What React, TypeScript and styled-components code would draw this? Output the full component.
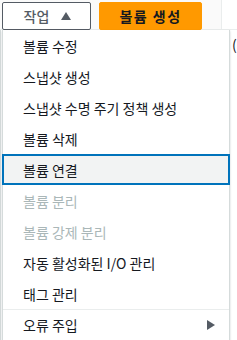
import React from "react";
import styled, { createGlobalStyle } from "styled-components";

const Global = createGlobalStyle`
  html, body { margin: 0; padding: 0; background: #ffffff; }
  body { font-family: "Noto Sans CJK KR", "Noto Sans", sans-serif; font-size: 14px; color: #16191f; }
  #root { width: 237px; height: 340px; overflow: hidden; }
`;

const Page = styled.div`
  position: relative;
  width: 237px;
  height: 340px;
  overflow: hidden;
  background: #ffffff;
`;

const Toolbar = styled.div`
  display: flex;
  height: 30px;
  border-bottom: 1px solid #eaeded;
  box-sizing: border-box;
`;

const ToolbarMain = styled.div`
  display: flex;
  align-items: flex-start;
  gap: 8px;
  width: 222px;
  padding: 2px 0 0 2px;
  box-sizing: border-box;
  background: #fafafa;
  border-right: 1px solid #eaeded;
`;

const Button = styled.button<{ $primary?: boolean }>`
  display: flex;
  align-items: center;
  justify-content: center;
  gap: 12px;
  height: 28px;
  box-sizing: border-box;
  padding: ${(p) => (p.$primary ? "0" : "0 0 0 2px")};
  border-radius: 2px;
  border: 1px solid ${(p) => (p.$primary ? "#ff9900" : "#545b64")};
  background: ${(p) => (p.$primary ? "#ff9900" : "#ffffff")};
  color: ${(p) => (p.$primary ? "#16191f" : "#545b64")};
  font-family: "Noto Sans CJK KR", "Noto Sans", sans-serif;
  font-size: 14px;
  font-weight: ${(p) => (p.$primary ? 700 : 500)};
  letter-spacing: ${(p) => (p.$primary ? "1.5px" : "0")};
  width: ${(p) => (p.$primary ? "103px" : "89px")};
`;

const Caret = styled.svg`
  width: 10px;
  height: 8px;
  display: block;
`;

const Content = styled.div`
  position: relative;
  height: 310px;
  display: flex;
`;

const LeftEdge = styled.div`
  width: 1px;
  background: #d5dbdb;
`;

const RightText = styled.div`
  margin-left: auto;
  padding-top: 4px;
  width: 5px;
  overflow: hidden;
  color: #16191f;
  font-size: 14px;
  line-height: 20px;
`;

const Menu = styled.ul`
  position: absolute;
  top: 30px;
  left: 2px;
  width: 228px;
  margin: 0;
  padding: 0;
  list-style: none;
  box-sizing: border-box;
  background: #ffffff;
  border: 1px solid #d5dbdb;
  border-top: none;
  box-shadow: 0 1px 2px rgba(0, 28, 36, 0.2);
`;

const Item = styled.li<{ $active?: boolean; $disabled?: boolean; $divider?: boolean }>`
  display: flex;
  align-items: center;
  justify-content: space-between;
  height: 31px;
  box-sizing: border-box;
  padding: ${(p) => (p.$active ? "0 14px 0 19px" : "0 14px 0 20px")};
  margin: ${(p) => (p.$active ? "0 -1px" : "0")};
  border: ${(p) => (p.$active ? "2px solid #0073bb" : "none")};
  border-top: ${(p) => (p.$divider ? "1px solid #eaeded" : undefined)};
  background: ${(p) => (p.$active ? "#f2f3f3" : "transparent")};
  color: ${(p) => (p.$disabled ? "#aab7b8" : "#16191f")};
  font-size: 14px;
  white-space: nowrap;
`;

const SubArrow = styled.svg`
  width: 8px;
  height: 10px;
  display: block;
`;

type Entry = { label: string; active?: boolean; disabled?: boolean; divider?: boolean; sub?: boolean };

const entries: Entry[] = [
  { label: "볼륨 수정" },
  { label: "스냅샷 생성" },
  { label: "스냅샷 수명 주기 정책 생성" },
  { label: "볼륨 삭제" },
  { label: "볼륨 연결", active: true },
  { label: "볼륨 분리", disabled: true },
  { label: "볼륨 강제 분리", disabled: true },
  { label: "자동 활성화된 I/O 관리" },
  { label: "태그 관리" },
  { label: "오류 주입", divider: true, sub: true },
];

export default function App() {
  return (
    <Page>
      <Global />
      <Toolbar>
        <ToolbarMain>
          <Button>
            <span>작업</span>
            <Caret viewBox="0 0 10 8">
              <path d="M5 0 L10 8 L0 8 Z" fill="#545b64" />
            </Caret>
          </Button>
          <Button $primary>볼륨 생성</Button>
        </ToolbarMain>
      </Toolbar>
      <Content>
        <LeftEdge />
        <RightText>(</RightText>
      </Content>
      <Menu>
        {entries.map((e) => (
          <Item key={e.label} $active={e.active} $disabled={e.disabled} $divider={e.divider}>
            <span>{e.label}</span>
            {e.sub && (
              <SubArrow viewBox="0 0 8 10">
                <path d="M0 0 L8 5 L0 10 Z" fill="#545b64" />
              </SubArrow>
            )}
          </Item>
        ))}
      </Menu>
    </Page>
  );
}
